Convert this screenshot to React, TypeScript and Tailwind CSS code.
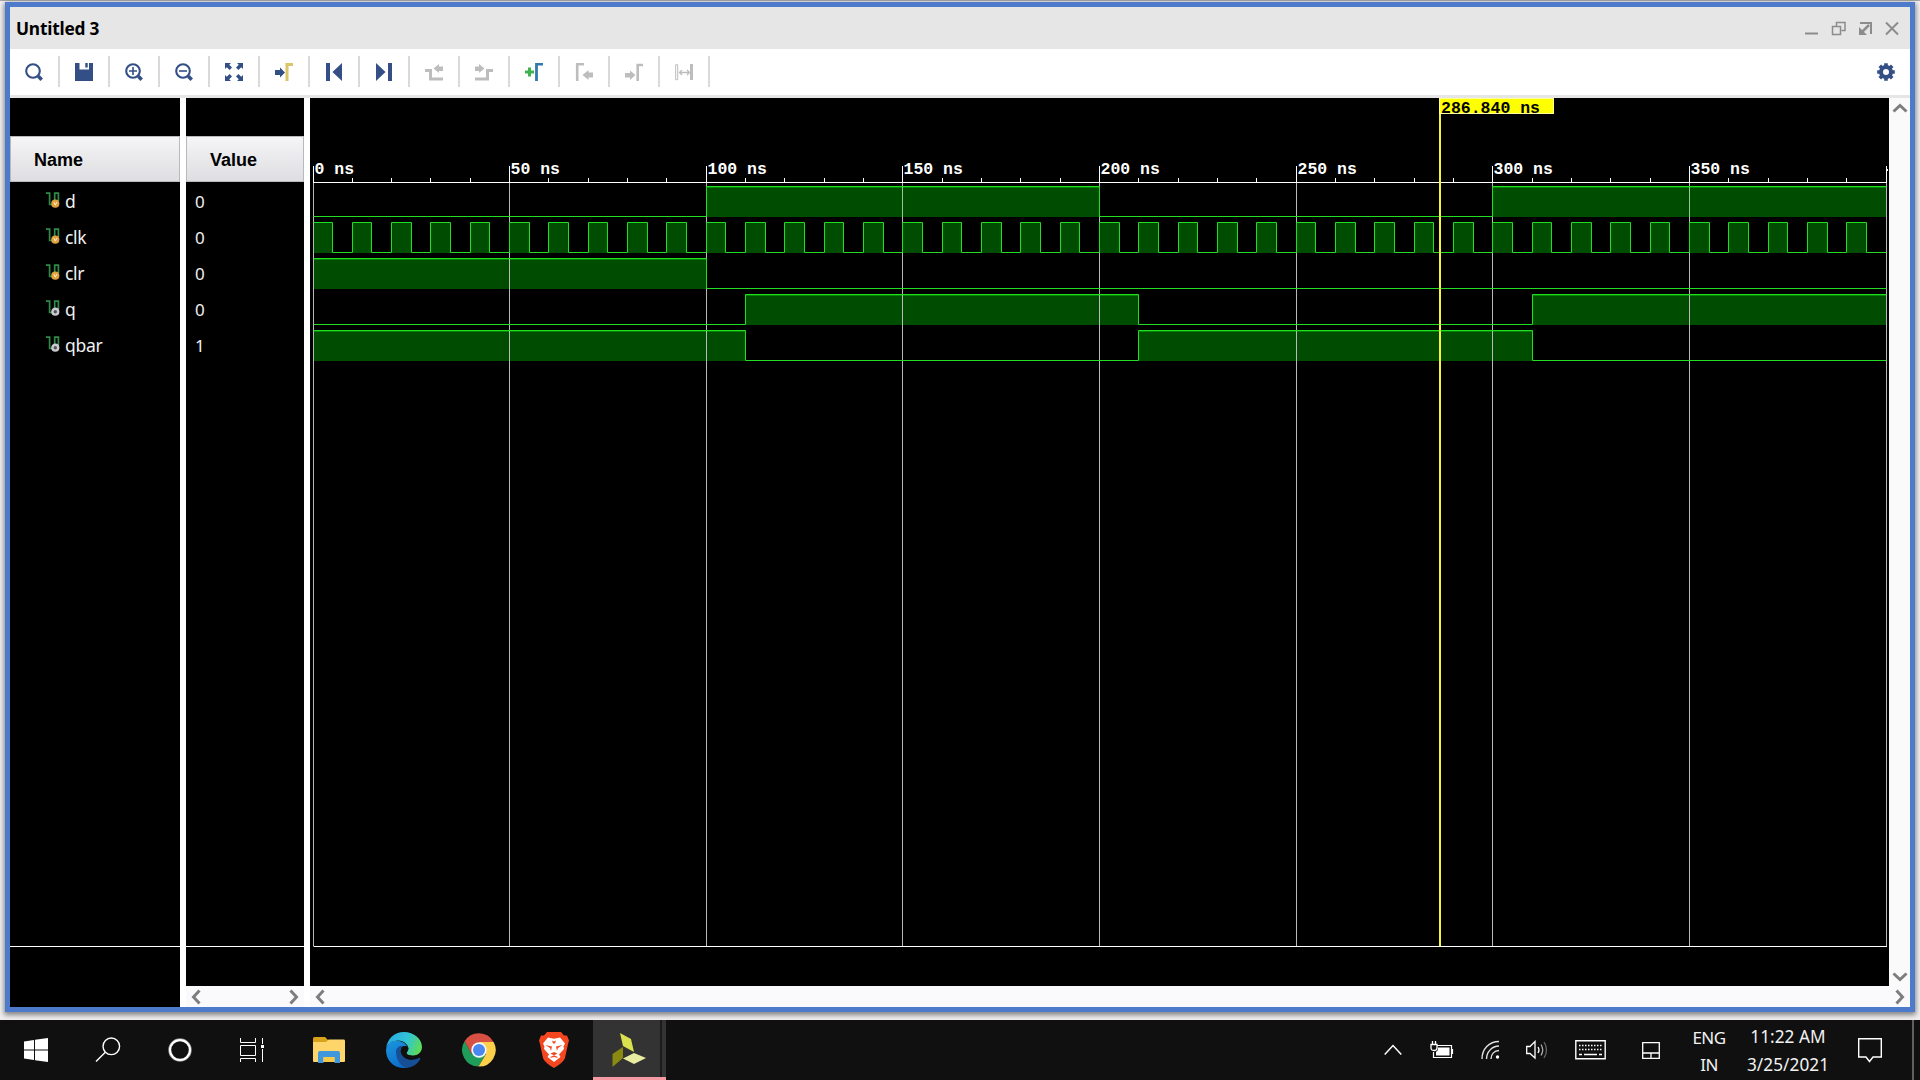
import React from 'react';

const T0 = 3;
const PX_PER_NS = 3.9325;
const END = 400;
const xAt = (t: number) => Math.floor(T0 + 0.01 + t * PX_PER_NS) + 0.5;

type Signal = { name: string; value: string; kind: 'in' | 'out'; high: [number, number][] };

const clock: [number, number][] = Array.from({ length: 40 }, (_, i) => [i * 10, i * 10 + 5]);

const signals: Signal[] = [
  { name: 'd', value: '0', kind: 'in', high: [[100, 200], [300, 400]] },
  { name: 'clk', value: '0', kind: 'in', high: clock },
  { name: 'clr', value: '0', kind: 'in', high: [[0, 100]] },
  { name: 'q', value: '0', kind: 'out', high: [[110, 210], [310, 400]] },
  { name: 'qbar', value: '1', kind: 'out', high: [[0, 110], [210, 310]] },
];

function tracePath(high: [number, number][], top: number, bottom: number) {
  let d = '';
  let last = 0;
  let started = false;
  for (const [a, b] of high) {
    if (a > last || started) {
      d += `${started ? 'L' : 'M'}${xAt(last)} ${bottom}L${xAt(a)} ${bottom}L${xAt(a)} ${top}`;
    } else {
      d += `M${xAt(a)} ${top}`;
    }
    started = true;
    d += `L${xAt(b)} ${top}`;
    if (b < END) d += `L${xAt(b)} ${bottom}`;
    last = b;
  }
  if (last < END) d += `L${xAt(END)} ${bottom}`;
  return d;
}

function Waveform() {
  const majors = [0, 50, 100, 150, 200, 250, 300, 350, 400];
  const minors = Array.from({ length: 40 }, (_, i) => i * 10).filter((t) => t % 50 !== 0);
  return (
    <svg width="1579" height="888" viewBox="0 0 1579 888" className="block bg-black">
      {signals.map((s, i) => {
        const top = 88.5 + i * 36;
        return s.high.map(([a, b]) => (
          <g key={`${s.name}${a}`}>
            <rect x={xAt(a)} y={top} width={xAt(b) - xAt(a)} height="30.5" fill="#004c00" />
            {s.name !== 'clk' && <rect x={xAt(a)} y={top + 0.5} width={xAt(b) - xAt(a)} height="1" fill="#008500" />}
          </g>
        ));
      })}
      {majors.map((t) => (
        <path key={t} d={`M${xAt(t)} 85V848`} stroke="#b9b9b9" />
      ))}
      {signals.map((s, i) => (
        <path key={s.name} d={tracePath(s.high, 88.5 + i * 36, 118.5 + i * 36)} fill="none" stroke="#23dd23" />
      ))}
      {[150, 350].map((t) => (
        <path key={t} d={`M${xAt(t)} 89V119`} stroke="#8fc98f" />
      ))}
      <path d={`M${xAt(0)} 84.5H${xAt(END) + 0.5}M${xAt(0)} 848.5H${xAt(END) + 0.5}`} stroke="#fff" />
      {majors.map((t) => (
        <path key={t} d={`M${xAt(t)} 68V85`} stroke="#fff" />
      ))}
      {minors.map((t) => (
        <path key={t} d={`M${xAt(t)} 80V84`} stroke="#fff" />
      ))}
      <g fontFamily='"Liberation Mono", monospace' fontWeight="700" fontSize="16.5">
        {majors.slice(0, 8).map((t) => (
          <text key={t} x={xAt(t) + 1} y="76" fill="#fff">{`${t} ns`}</text>
        ))}
        <rect x="1576.5" y="71" width="1.5" height="2" fill="#fff" />
        <path d="M1130 0V848" stroke="#f4f43c" strokeWidth="2" />
        <rect x="1129.5" y="0.5" width="114" height="15" fill="#ff0" stroke="#ffff9c" />
        <text x="1131" y="15" fill="#000">286.840 ns</text>
      </g>
    </svg>
  );
}

const Ico = ({ children }: { children: React.ReactNode }) => (
  <svg width="18" height="18" viewBox="0 0 18 18" fill="none" className="block">
    {children}
  </svg>
);

const NAVY = '#334f86';
const GRAY = '#bdbdbd';

const lens = (
  <>
    <circle cx="8" cy="8" r="6.8" stroke={NAVY} strokeWidth="2.1" />
    <path d="M13.3 13.3L16.7 16.7" stroke={NAVY} strokeWidth="3.6" />
  </>
);

const tools: React.ReactNode[] = [
  lens,
  <path d="M0 0h4.500v6.500h9.500V0h4v18H0zM10.300 0h2.400v4.500h-2.400z" fill={NAVY} />,
  <>{lens}<path d="M8 4v8M4 8h8" stroke={NAVY} strokeWidth="1.6" /></>,
  <>{lens}<path d="M4 8h8" stroke={NAVY} strokeWidth="1.6" /></>,
  <>
    <path d="M0 0h6L4.200 1.800 7 4.600 4.600 7 1.800 4.200 0 6zM18 0v6l-1.800-1.800L13.400 7 11 4.600l2.800-2.800L12 0zM0 18v-6l1.800 1.800L4.600 11 7 13.400l-2.800 2.800L6 18zM18 18h-6l1.800-1.800L11 13.400 13.400 11l2.800 2.800L18 12z" fill={NAVY} />
  </>,
  <>
    <path d="M0 7h5V4.500L10 9.500 5 14.500V12H0z" fill={NAVY} />
    <path d="M12 18V1.500H18" stroke="#dcc468" strokeWidth="3" />
  </>,
  <path d="M1 0h4v18H1zM17 0v18L7.500 9z" fill={NAVY} />,
  <path d="M13 0h4v18h-4zM1 0v18L10.500 9z" fill={NAVY} />,
  <>
    <path d="M0 7.500H5.500V16H18" stroke={GRAY} strokeWidth="3" />
    <path d="M18 3.500h-4V1L8.500 5.500 14 10V8h4z" fill={GRAY} />
  </>,
  <>
    <path d="M18 7.500H12.500V16H0" stroke={GRAY} strokeWidth="3" />
    <path d="M0 3.500h4V1L9.500 5.500 4 10V8H0z" fill={GRAY} />
  </>,
  <>
    <path d="M0 9h9M4.500 4.500v9" stroke="#3fb24b" strokeWidth="3" />
    <path d="M11.500 18V1.200H18" stroke="#3279ad" strokeWidth="2.800" />
  </>,
  <>
    <path d="M2.200 18V1.200H9" stroke={GRAY} strokeWidth="2.600" />
    <path d="M18 9.500h-4.500V7L7.500 12l6 5V14.500H18z" fill={GRAY} />
  </>,
  <>
    <path d="M12.700 18V2H18" stroke={GRAY} strokeWidth="2.600" />
    <path d="M0 10h5V7.500L10.500 12 5 17V14.500H0z" fill={GRAY} />
  </>,
  <>
    <path d="M.7 1.700h2v15h-2z" stroke={GRAY} />
    <path d="M15 1h3v16h-3z" fill={GRAY} />
    <path d="M5 9.500h9M7 7L4.500 9.500 7 12M12 7l2.500 2.500L12 12" stroke={GRAY} strokeWidth="1.300" />
  </>,
];

function Gear() {
  return (
    <Ico>
      <circle cx="9" cy="9" r="5" stroke={NAVY} strokeWidth="4" />
      {[0, 45, 90, 135].map((a) => (
        <path key={a} d="M9 0.200V3.500M9 14.500V17.800" stroke={NAVY} strokeWidth="3.600" transform={`rotate(${a} 9 9)`} />
      ))}
    </Ico>
  );
}

function Chevron({ dir }: { dir: 'left' | 'right' | 'up' | 'down' }) {
  const d = {
    left: 'M8.500 1.500L2.500 8l6 6.500',
    right: 'M1.500 1.500L7.500 8l-6 6.500',
    up: 'M1.500 8.500L8 2.500l6.500 6',
    down: 'M1.500 1.500L8 7.500l6.500-6',
  }[dir];
  const horizontal = dir === 'left' || dir === 'right';
  return (
    <svg width={horizontal ? 10 : 16} height={horizontal ? 16 : 10} fill="none" className="block">
      <path d={d} stroke="#7d7d7d" strokeWidth="3" />
    </svg>
  );
}

function SignalIcon({ kind }: { kind: 'in' | 'out' }) {
  return (
    <svg width="16" height="16" viewBox="0 0 16 16" fill="none" className="mb-[2px] block">
      <path d="M0 1.200H3.600V12.500H6M8.700 9V1.200H12.400V9" stroke="#2f8c48" strokeWidth="1.700" />
      {kind === 'in' ? (
        <>
          <circle cx="9.300" cy="11.700" r="4.100" fill="#e2a03c" />
          <path d="M7.800 10l1.500 3.200 1.500-3.200" stroke="#fff0c8" />
        </>
      ) : (
        <circle cx="9.300" cy="11.700" r="2.900" fill="#555" stroke="#c9c9cf" strokeWidth="2.400" />
      )}
    </svg>
  );
}

function HeaderCell({ children, pad }: { children: string; pad: string }) {
  return (
    <div className={`mt-[38px] flex h-[46px] items-center border border-[#b9b9bd] bg-linear-to-b from-[#f5f5f6] to-[#dedee2] pt-[2px] font-['Liberation_Sans',sans-serif] text-[18px] font-bold text-black ${pad}`}>
      {children}
    </div>
  );
}

function TitleBar() {
  return (
    <div className="flex h-[42px] items-center justify-between bg-[#e6e6e6] pr-[10px] pl-[6px]">
      <span className="pt-[1px] font-['Noto_Sans','Open_Sans',sans-serif] text-[17.3px] font-bold tracking-[-0.2px] text-black">Untitled 3</span>
      <svg width="96" height="16" fill="none" className="mt-[2px] block" stroke="#8c8c8c">
        <path d="M1 12.500H14" strokeWidth="2" />
        <path d="M32.500 5V1.500H41V9.500H37.500M28.500 5.500H36.500V13.500H28.500Z" strokeWidth="1.500" />
        <path d="M56 2H67V13" strokeWidth="2" />
        <path d="M65 4L58 11" strokeWidth="2.500" />
        <path d="M55 6v8h8z" fill="#8c8c8c" stroke="none" />
        <path d="M82 1.500L94 13.500M94 1.500L82 13.500" strokeWidth="2" />
      </svg>
    </div>
  );
}

function Toolbar() {
  return (
    <div className="flex h-[49px] items-start justify-between border-b-[3px] border-[#e6e6e6] bg-white pr-[15px]">
      <div className="flex pt-[7px]">
        {tools.map((t, i) => (
          <div key={i} className="flex h-[31px] w-[50px] items-center justify-center border-r-2 border-[#dadada]">
            <Ico>{t}</Ico>
          </div>
        ))}
      </div>
      <div className="pt-[14px]"><Gear /></div>
    </div>
  );
}

function Windows() {
  return (
    <svg width="24" height="24" className="block" fill="#fff">
      <path d="M0 3.400L10 2V11.400H0zM11 1.800L24 0V11.400H11zM0 12.600H10V22L0 20.600zM11 12.600H24V24L11 22.200z" />
    </svg>
  );
}

function Edge() {
  return (
    <svg width="36" height="36" viewBox="0 0 36 36" className="block">
      <defs>
        <linearGradient id="edgeTop" x1="0" y1="0.300" x2="1" y2="0.600">
          <stop offset="0" stopColor="#2aa9e6" />
          <stop offset="0.550" stopColor="#30c6d6" />
          <stop offset="1" stopColor="#5fdc52" />
        </linearGradient>
        <linearGradient id="edgeLeft" x1="0" y1="0" x2="0.600" y2="1">
          <stop offset="0" stopColor="#1b97e0" />
          <stop offset="1" stopColor="#0c6bc8" />
        </linearGradient>
      </defs>
      <path d="M0 18C1 10 8 8 13 9c6 1 9 5 9 9l-8 0c-3 6 2 14 12 15.500C22 36 18 36 17 36 7 35.500 0 28 0 18z" fill="url(#edgeLeft)" />
      <path d="M10 20c0-4 3-6.500 6-6-3 4-1 12 7 13.500 4 .8 8-.5 10-1.500 1.500-.5 1.500.6 1 1.500C31 33 25 36 20 35.500 14 34 10 27 10 20z" fill="#174f96" />
      <path d="M0 17C1 7 8 0 18 0c10 0 18 7 18 15 0 6-5 8.500-9 8.500-4 0-7-1-6.500-2.500.3-1 2-2 2-4.500C22 12 17 8.500 12 8.500 6 8.500 1 12 0 17z" fill="url(#edgeTop)" />
      <path d="M15.500 15c1.500-1.500 5-1.500 6.500 0 .8 2.500-1 4-1.500 5.500-.3 1.500 1.500 3 4.500 3.300 3 .3 6-.3 7.500-1.300-.5 2.500-3 5-8.500 5-6-.5-11-6-8.500-12.500z" fill="#101010" />
    </svg>
  );
}

function Chrome() {
  return (
    <svg width="34" height="34" viewBox="0 0 34 34" className="block">
      <path d="M2.600 8.300A16.600 16.600 0 0 0 16.500 33.600L24 21 17 17 9.800 21z" fill="#1f9d5a" />
      <path d="M2.600 8.300L9.800 21 17 9H31.500A16.600 16.600 0 0 0 2.600 8.300z" fill="#d84f43" />
      <path d="M16.500 33.600A16.600 16.600 0 0 0 31.600 9H17L24 21z" fill="#fdd04a" />
      <circle cx="17" cy="17" r="7.700" fill="#f4f6fa" />
      <circle cx="17" cy="17" r="6" fill="#4a87ee" />
    </svg>
  );
}

function Brave() {
  return (
    <svg width="30" height="36" viewBox="0 0 30 36" className="block">
      <path d="M8 0H22L25 3.500 28 3.500 30 8.500 29 12 26 26C25 29.500 19 33.500 15 36 11 33.500 5 29.500 4 26L1 12 0 8.500 2 3.500 5 3.500z" fill="#f4471f" />
      <path d="M9 5.500L15 6.800 21 5.500 26 11.500 24.500 14.500 25 17 20 22.500 21.500 25 15 30 8.500 25 10 22.500 5 17 5.500 14.500 4 11.500z" fill="#fff" />
      <path d="M6.500 13L13 14.500 12 19 11 16zM23.500 13L17 14.500 18 19 19 16zM11.500 21.500L15 20l3.500 1.500L15 23.500zM11 25l4-1.500 4 1.500-1 .8-3-.8-3 .8zM13 8.500l2 1 2-1-1 3h-2z" fill="#f4471f" />
    </svg>
  );
}

function Vivado() {
  return (
    <svg width="34" height="34" viewBox="0 0 34 34" className="block">
      <path d="M8 0L19 6 22 19 11 13z" fill="#dbe04e" />
      <path d="M0.500 21L11 14V25L0.500 34z" fill="#8a8a12" />
      <path d="M11 25.500L22 20 34 25 22 31z" fill="#e8eca0" />
    </svg>
  );
}

function Folder() {
  return (
    <svg width="32" height="27" viewBox="0 0 32 27" className="block">
      <path d="M0 1.500Q0 0 1.500 0H12L15 3V7H0z" fill="#d9a21b" />
      <path d="M0 5H13L15.500 2.500H31Q32 2.500 32 4V24Q32 25 31 25H1Q0 25 0 24z" fill="#fdd56a" />
      <path d="M5 26V16Q5 14 7 14H25Q27 14 27 16V26H21.500V20H10.500V26z" fill="#3f97dc" />
      <path d="M10.500 20H21.500V25H10.500z" fill="#f7c948" />
    </svg>
  );
}

const Slot = ({ w, children }: { w: string; children: React.ReactNode }) => (
  <div className={`flex h-[60px] shrink-0 items-center justify-center ${w}`}>{children}</div>
);

function Taskbar() {
  return (
    <div className="flex h-[60px] justify-between bg-[#101010] font-['Noto_Sans','Open_Sans',sans-serif] text-[#f2f2f2]">
      <div className="flex">
        <Slot w="w-[72px]"><Windows /></Slot>
        <Slot w="w-[72px]">
          <svg width="26" height="26" fill="none" stroke="#fff" strokeWidth="1.400" className="block">
            <circle cx="16.300" cy="9.300" r="8.300" />
            <path d="M10.300 15.300L1 24.600" />
          </svg>
        </Slot>
        <Slot w="w-[72px]">
          <svg width="24" height="24" fill="none" className="block">
            <circle cx="12" cy="12" r="10.900" stroke="#8a8a8a" strokeWidth="1.800" />
            <circle cx="12" cy="12" r="9.900" stroke="#fff" strokeWidth="2.200" />
          </svg>
        </Slot>
        <Slot w="w-[72px]">
          <svg width="24" height="24" fill="none" stroke="#fff" className="block">
            <path d="M.5 0V4.500H15.500V0M.5 7.500H15.500V17.500H.5zM.5 24V20.500H15.500V24M22.500 0V6M22.500 11V24" />
            <path d="M21 7h3v3h-3z" fill="#fff" stroke="none" />
          </svg>
        </Slot>
        <Slot w="w-[82px]"><Folder /></Slot>
        <Slot w="w-[68px]"><Edge /></Slot>
        <Slot w="w-[82px]"><Chrome /></Slot>
        <Slot w="w-[68px]"><Brave /></Slot>
        <div className="flex w-[5px]" />
        <div className="flex h-[60px] w-[73px] border-b-[3px] border-[#f59aa3] bg-[#333]">
          <div className="flex w-[67px] items-center justify-center pt-[2px] pl-[5px]"><Vivado /></div>
          <div className="w-[2px] bg-[#1b1b1b]" />
        </div>
      </div>
      <div className="flex">
        <Slot w="w-[20px]">
          <svg width="18" height="12" fill="none" stroke="#fff" strokeWidth="1.500" className="block"><path d="M.7 10.500L9 1.500l8.300 9" /></svg>
        </Slot>
        <Slot w="w-[77px]">
          <svg width="24" height="18" fill="none" stroke="#fff" className="block">
            <path d="M7 4.500H21.500V16.500H3.500V11M22.500 8v5" strokeWidth="1.200" />
            <path d="M8 6.500H19.500V14.500H6V11L8 9z" fill="#fff" stroke="none" />
            <path d="M2.500 0V3M5.500 0V3M1 3.500H7V7Q7 9.500 4 9.500T1 7z" strokeWidth="1.300" fill="#101010" />
          </svg>
        </Slot>
        <Slot w="w-[22px]">
          <svg width="20" height="20" fill="none" stroke="#e0e0e0" strokeWidth="1.400" className="block">
            <path d="M1 19C1 9 8 1.500 18 1.500M5.500 19C5.500 12 11 6 18 6M10 19C10 14 13.500 10.500 18 10.500" />
            <circle cx="16.500" cy="17" r="1.700" fill="#fff" stroke="none" />
          </svg>
        </Slot>
        <Slot w="w-[69px]">
          <svg width="22" height="20" fill="none" stroke="#fff" strokeWidth="1.300" className="block">
            <path d="M.7 6.500H4L9 1.500V18L4 13.500H.7z" />
            <path d="M12 7q2 3 0 6" />
            <path d="M15 4.500q3.500 5.500 0 11" stroke="#aaa" />
            <path d="M18 2q5 8 0 16" stroke="#666" />
          </svg>
        </Slot>
        <Slot w="w-[40px]">
          <svg width="32" height="20" fill="none" stroke="#fff" className="block">
            <path d="M.8 .8H30.200V18.800H.8z" strokeWidth="1.400" />
            <path d="M4 5.500H28M4 9.500H28" strokeDasharray="1.500 1.500" strokeWidth="1.400" />
            <path d="M4 14.500H7M9 14.500H22M24 14.500H27" strokeWidth="1.300" />
          </svg>
        </Slot>
        <Slot w="w-[80px]">
          <svg width="18" height="17" fill="none" stroke="#fff" strokeWidth="1.300" className="block">
            <path d="M.7 .7H17.300V16.300H.7zM.7 11H17.300M9 11V16.300" />
          </svg>
        </Slot>
        <div className="flex w-[36px] flex-col items-center pt-[4px] text-[17px] leading-[27px] tracking-[-0.500px]">
          <span>ENG</span>
          <span>IN</span>
        </div>
        <div className="flex w-[122px] flex-col items-center pt-[3px] text-[17.200px] leading-[28px] tracking-[0.050px] whitespace-nowrap">
          <span>11:22 AM</span>
          <span>3/25/2021</span>
        </div>
        <Slot w="w-[42px]">
          <svg width="24" height="26" fill="none" stroke="#fff" strokeWidth="1.400" className="block">
            <path d="M.7 1.700H23.300V20H15L11.500 24.500 8 20H.7z" />
          </svg>
        </Slot>
        <div className="ml-[21px] flex w-[8px] border-l-2 border-[#5f5f5f]" />
      </div>
    </div>
  );
}

export default function App() {
  return (
    <div className="flex h-[1080px] w-[1920px] flex-col overflow-hidden bg-[#f1eff0]">
      <div className="h-[1020px] border-t border-[#a8a8a8] pt-[1px] pr-[5px] pb-[8px] pl-[5px]">
        <div className="flex h-[1010px] flex-col border-[5px] border-[#4d7acb] bg-white shadow-[0_2px_5px_1px_rgba(0,0,0,0.45)]">
          <TitleBar />
          <Toolbar />
          <div className="flex h-[909px] gap-[6px]">
            <div className="flex w-[170px] flex-col bg-black">
              <HeaderCell pad="pl-[23px]">Name</HeaderCell>
              <div className="flex h-[765px] flex-col border-b border-white pt-[1px]">
                {signals.map((s) => (
                  <div key={s.name} className="flex h-[36px] items-center pl-[36px] font-['Noto_Sans','Open_Sans',sans-serif] text-[17.500px] tracking-[-0.300px] text-[#f0f0f0]">
                    <SignalIcon kind={s.kind} />
                    <span className="ml-[3px] pt-[1px]">{s.name}</span>
                  </div>
                ))}
              </div>
            </div>
            <div className="flex w-[118px] flex-col bg-black">
              <HeaderCell pad="pl-[23px]">Value</HeaderCell>
              <div className="flex h-[765px] flex-col border-b border-white pt-[1px]">
                {signals.map((s) => (
                  <div key={s.name} className="flex h-[36px] items-center pt-[1px] pl-[9px] font-['Noto_Sans','Open_Sans',sans-serif] text-[17px] text-[#f0f0f0]">
                    {s.value}
                  </div>
                ))}
              </div>
              <div className="mt-auto flex h-[21px] items-center justify-between bg-[#fafafc] px-[5px]">
                <Chevron dir="left" />
                <Chevron dir="right" />
              </div>
            </div>
            <div className="flex w-[1600px] flex-col">
              <div className="flex h-[888px]">
                <Waveform />
                <div className="flex w-[21px] flex-col items-center justify-between bg-[#fafafa] pt-[5px] pb-[4px]">
                  <Chevron dir="up" />
                  <Chevron dir="down" />
                </div>
              </div>
              <div className="flex h-[21px] items-center justify-between bg-[#fafafc] px-[5px]">
                <Chevron dir="left" />
                <Chevron dir="right" />
              </div>
            </div>
          </div>
        </div>
      </div>
      <Taskbar />
    </div>
  );
}
